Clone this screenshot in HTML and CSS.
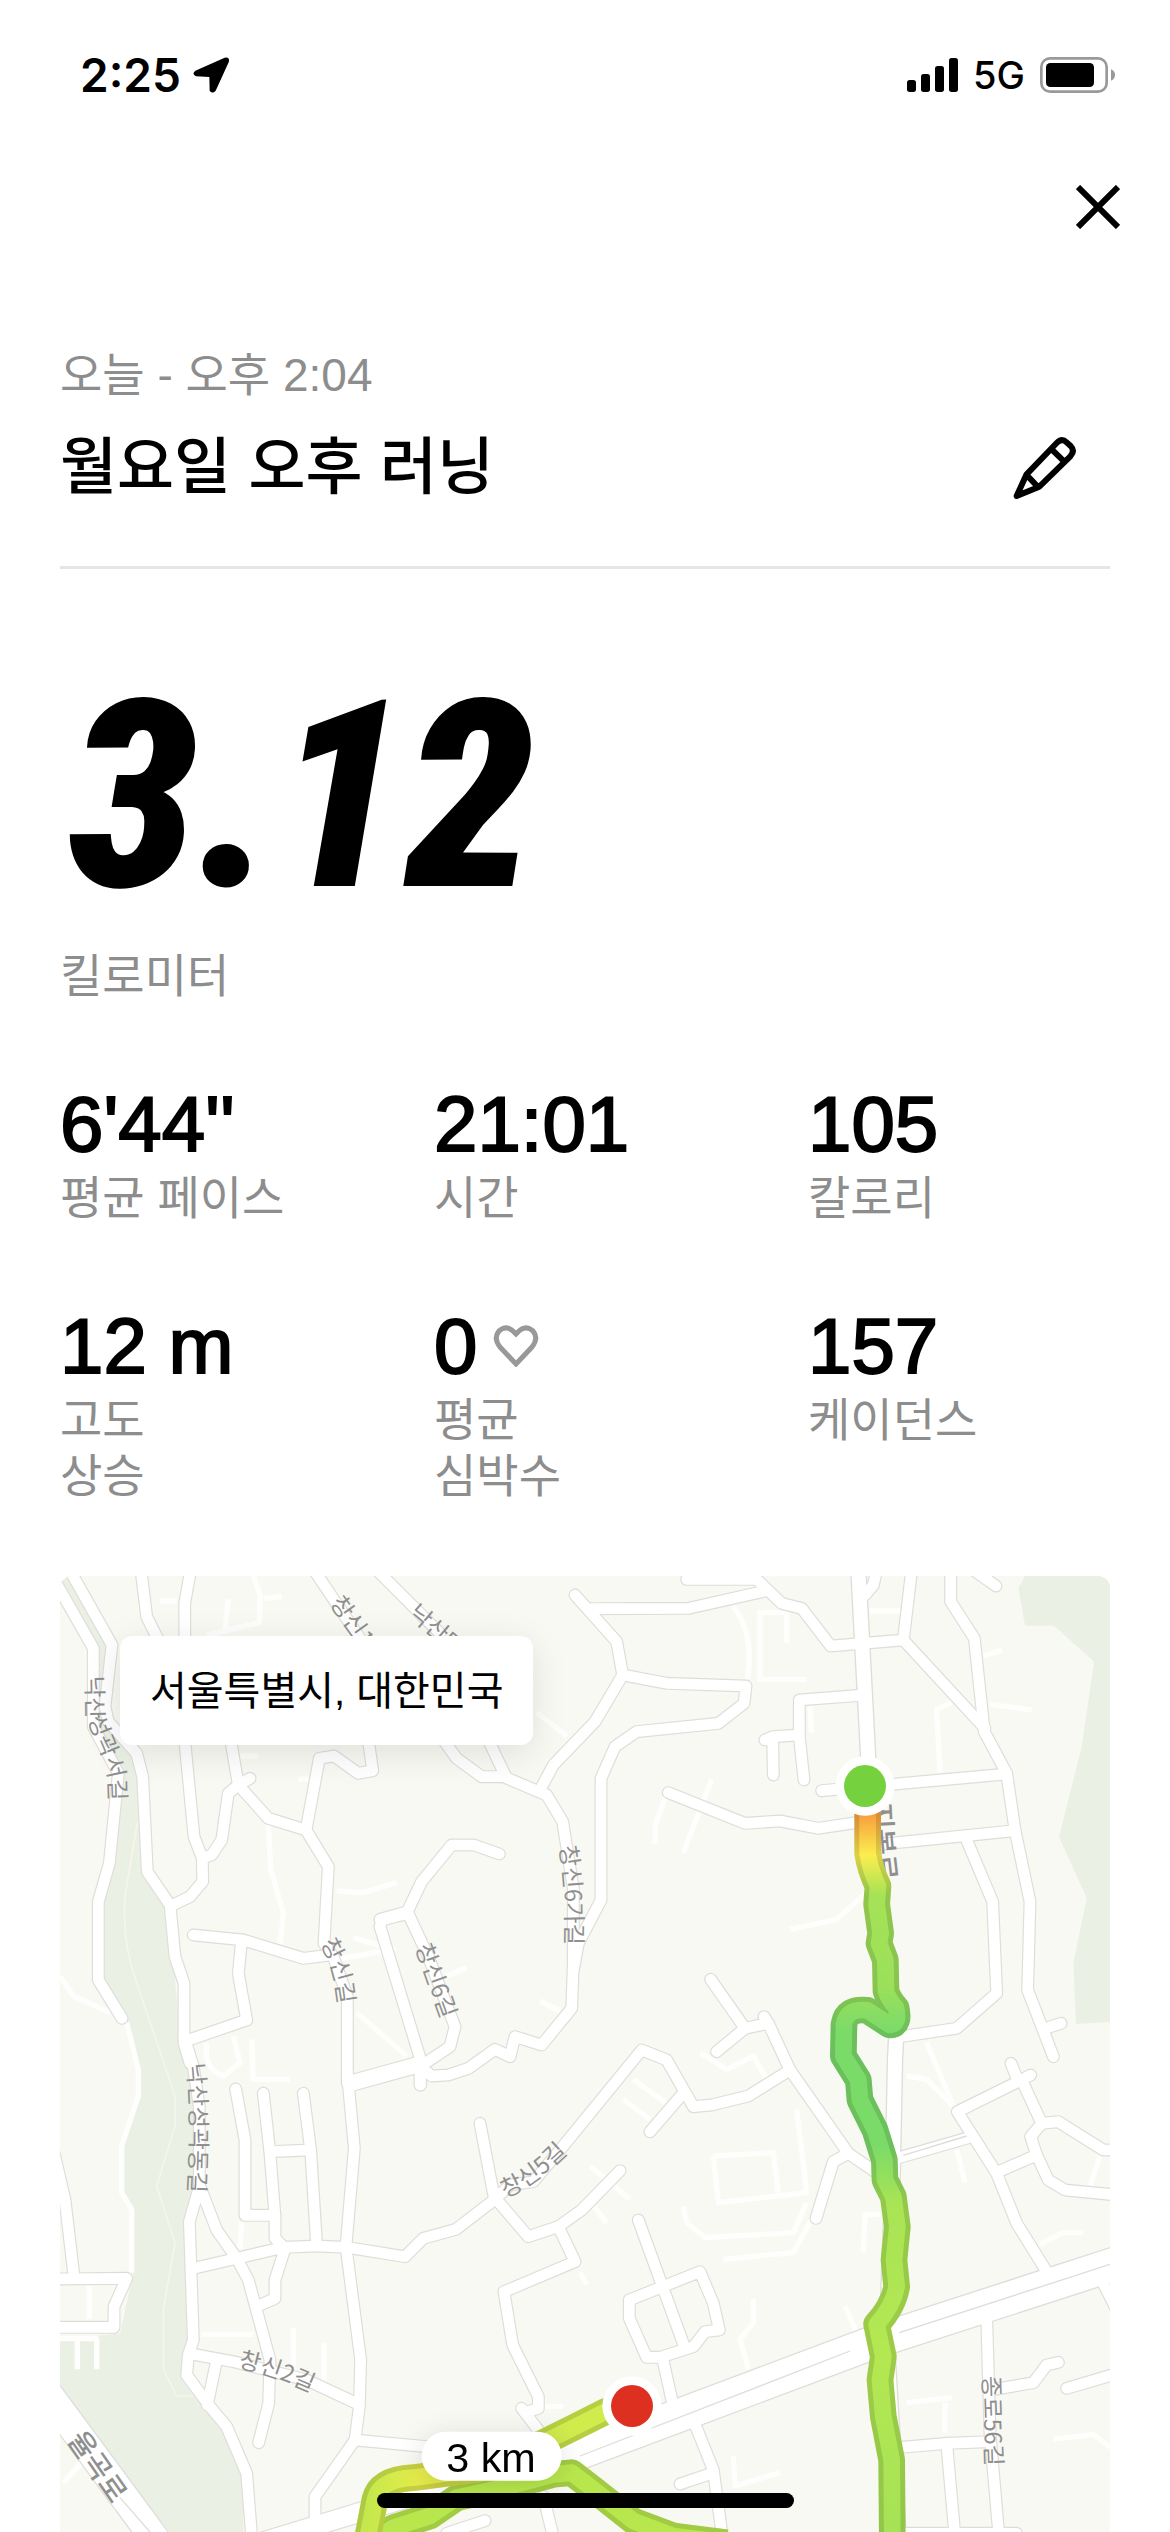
FILE: index.html
```
<!DOCTYPE html>
<html lang="ko">
<head>
    <meta charset="UTF-8">
    <meta name="viewport" content="width=device-width, initial-scale=1.0">
    <title>월요일 오후 러닝</title>
    <link rel="stylesheet" href="styles.css">
</head>
<body>
    <div class="status-bar">
        <div class="status-group">
            <span class="time">2:25</span>
            <svg class="location-icon" viewBox="392 51 108 108" aria-hidden="true">
                <path d="M399 92 L487 53 Q504 50 499 67 L460 152 Q450 163 442 152 L441 111 L401 109 Q387 102 399 92Z"/>
            </svg>
        </div>
        <div class="status-group status-right">
            <svg class="signal-icon" viewBox="0 0 153 102" aria-hidden="true">
                <rect x="0" y="66" width="27" height="36" rx="8"/>
                <rect x="42" y="48" width="27" height="54" rx="8"/>
                <rect x="84" y="24" width="27" height="78" rx="8"/>
                <rect x="126" y="0" width="27" height="102" rx="8"/>
            </svg>
            <span class="network">5G</span>
            <svg class="battery-icon" viewBox="0 0 225 108" aria-hidden="true">
                <rect class="battery-shell" x="4" y="4" width="196" height="100" rx="26"/>
                <rect x="18" y="18" width="144" height="72" rx="13"/>
                <path class="battery-tip" d="M213 37 Q225 42 225 54 Q225 66 213 71Z"/>
            </svg>
        </div>
    </div>

    <nav class="top-nav">
        <button type="button" class="icon-btn" aria-label="닫기">
            <svg class="close-icon" viewBox="0 0 44 44"><path d="M2 2 L42 42 M42 2 L2 42"/></svg>
        </button>
    </nav>

    <main class="content">
        <header class="run-header">
            <p class="run-date">오늘 - 오후 2:04</p>
            <div class="title-row">
                <h1>월요일 오후 러닝</h1>
                <button type="button" class="icon-btn" aria-label="이름 수정">
                    <svg class="pencil-icon" viewBox="40 45 198 198">
                        <path d="M80 164 L171 69 Q186 53 201 67 L213 78 Q227 92 212 109 L119 200 L51 228 Z M160 92 L190 121 M86 170 L110 196"/>
                    </svg>
                </button>
            </div>
        </header>

        <section class="distance">
            <p class="distance-value">3.12</p>
            <p class="label">킬로미터</p>
        </section>

        <section class="stats">
            <div class="stat">
                <p class="value">6'44''</p>
                <p class="label">평균 페이스</p>
            </div>
            <div class="stat">
                <p class="value">21:01</p>
                <p class="label">시간</p>
            </div>
            <div class="stat">
                <p class="value">105</p>
                <p class="label">칼로리</p>
            </div>
            <div class="stat">
                <p class="value">12 m</p>
                <p class="label">고도<br>상승</p>
            </div>
            <div class="stat">
                <p class="value">0
                    <svg class="heart-icon" viewBox="0 0 44 42" aria-hidden="true">
                        <path d="M22 39 L6 22 Q-1 13 5 6 Q13 -1 21 8 L22 9 L23 8 Q31 -1 39 6 Q45 13 38 22 Z"/>
                    </svg>
                </p>
                <p class="label">평균<br>심박수</p>
            </div>
            <div class="stat">
                <p class="value">157</p>
                <p class="label">케이던스</p>
            </div>
        </section>

        <section class="map">
            <svg class="map-canvas" viewBox="0 0 3150 2868" preserveAspectRatio="xMidYMin slice" role="img" aria-label="러닝 경로 지도">
                <defs>
                    <!-- side streets, one group per map tile -->
                    <g id="streets">
                        <g transform="translate(-60 -48)">
                            <path d="M50 72 L160 265 L160 500 L235 640 L208 910 L175 1025 L175 1260 L246 1375"/>
                            <path d="M88 28 L216 255 L195 440 L205 485 L290 580 L308 650 L322 935 L390 1035 L405 1190 L432 1270 L432 1450 L450 1510"/>
                            <path d="M303 30 L320 170 L370 270"/>
                            <path d="M452 30 L434 130 L436 560 L462 830 L487 895 L488 965 L450 1010 L392 1038"/>
                            <path d="M487 895 L515 885 L545 840 L565 700 L595 675 L630 655"/>
                            <path d="M572 540 L595 675 L685 775 L798 810 L865 920 L852 1150 L880 1190 L922 1310 L922 1570"/>
                            <path d="M798 810 L838 595 L882 588 L955 640 L998 632 L985 540"/>
                            <path d="M460 1125 L610 1140 L790 1195 L870 1185"/>
                            <path d="M605 1140 L595 1240 L620 1380 L440 1442"/>
                            <path d="M815 20 L960 235"/>
                            <path d="M1000 20 L1200 220"/>
                            <path d="M1105 1060 L1025 1080 L1020 1100 L1142 1500"/>
                        </g>
                        <g transform="translate(1020 -48)">
                            <path d="M130 540 L170 595 L245 650 L310 650 L440 705 L488 785 L520 985 L520 1210 L515 1345 L425 1455 L345 1430 L330 1490 L285 1468 L205 1525 L145 1545 L95 1548 L60 1520 L-140 1575"/>
                            <path d="M265 540 L315 645"/>
                            <path d="M420 690 L460 615 L585 485 L668 345 L650 245 L525 105"/>
                            <path d="M575 146 L865 145 L1095 93"/>
                            <path d="M668 345 L800 370 L1038 378 L1032 430 L955 490 L710 515 L645 560 L603 655 L603 1020 L535 1150 L520 1230"/>
                            <path d="M860 58 L1070 58 L1145 130 L1205 145 L1292 258 L1510 240 L1535 30"/>
                            <path d="M805 698 L1035 790 L1140 783 L1255 805 L1400 783"/>
                            <path d="M298 882 L222 855 L155 855 L65 965 L22 1055 L-60 1078"/>
                            <path d="M22 1055 L85 1190 L165 1400 L150 1460 L60 1520 L60 1575"/>
                            <path d="M932 1258 L1035 1405 L950 1475"/>
                            <path d="M1035 1405 L1105 1390 L1170 1530 L1345 1780 L1425 1835"/>
                            <path d="M1092 1370 L1105 1390"/>
                        </g>
                        <g transform="translate(2100 -48)">
                            <path d="M350 30 L340 75 L315 105"/>
                            <path d="M430 240 L675 505"/>
                            <path d="M572 30 L572 125 L643 235 L673 515 L740 640 L765 810 L810 1025 L803 1290 L880 1490"/>
                            <path d="M185 692 L740 642"/>
                            <path d="M370 852 L765 812"/>
                            <path d="M620 840 L698 1025 L710 1300 L590 1405 L420 1430"/>
                            <path d="M865 1402 L903 1390"/>
                            <path d="M640 30 L708 78"/>
                            <path d="M300 406 L118 420 L118 530 L132 660"/>
                            <path d="M118 525 L38 530 L15 540"/>
                            <path d="M38 540 L40 645"/>
                        </g>
                        <g transform="translate(-60 1392)">
                            <path d="M432 -10 L460 80 L478 200 L478 440 L448 545 L460 900 L445 945 L440 1005 L510 1100 L560 1160 L620 1300 L635 1490"/>
                            <path d="M480 440 L530 570 L590 655 L625 720 L690 960 L686 1090 L656 1208"/>
                            <path d="M460 685 L590 655 L730 622 L830 618 L920 622 L1095 650 L1150 595 L1248 568 L1362 480"/>
                            <path d="M587 147 L615 300 L615 526 L705 526"/>
                            <path d="M670 160 L690 340 L705 530 L705 595 L735 625 L705 720 L705 775 L650 800"/>
                            <path d="M690 335 L810 330"/>
                            <path d="M790 160 L812 330 L830 618"/>
                            <path d="M922 100 L943 325 L918 620 L962 960 L958 1100 L945 1200 L825 1370 L825 1440"/>
                            <path d="M922 125 L1140 65 L1142 135"/>
                            <path d="M455 942 L580 965 L800 1020 L950 1090"/>
                            <path d="M528 970 L502 1095"/>
                            <path d="M945 1200 L1160 1220"/>
                            <path d="M40 330 L75 480 L102 710"/>
                            <path d="M30 717 L260 715 L222 800 L222 862 L30 862"/>
                        </g>
                        <g transform="translate(1020 1392)">
                            <path d="M240 250 L282 470 L385 590 L475 560 L545 510 L660 392"/>
                            <path d="M282 480 L330 435 L400 425 L480 330 L725 30 L800 60 L880 200 L935 195 L1045 168 L1170 90"/>
                            <path d="M845 165 L750 275"/>
                            <path d="M475 560 L525 665 L312 755 L338 915 L415 1070 L415 1105 L385 1115"/>
                            <path d="M365 1105 L430 1190"/>
                            <path d="M715 540 L855 925"/>
                            <path d="M688 780 L900 695 L940 790 L958 870 L915 875 L880 920 L780 952 L740 952 L688 835 Z"/>
                            <path d="M788 955 L822 1110"/>
                            <path d="M880 1140 L940 1290 L967 1490"/>
                            <path d="M935 1300 L840 1332"/>
                            <path d="M430 1370 L460 1490"/>
                            <path d="M140 1480 L255 1442"/>
                        </g>
                        <g transform="translate(2100 1392)">
                            <path d="M265 340 L220 365 L168 535"/>
                            <path d="M410 355 L630 292"/>
                            <path d="M753 70 L775 125 L812 105"/>
                            <path d="M780 122 L592 215 L710 400 L770 550 L860 695"/>
                            <path d="M785 120 L845 250 L812 290 L830 345 L715 395"/>
                            <path d="M845 250 L895 245 L1030 330 L1070 330"/>
                            <path d="M830 345 L865 420 L915 450 L1070 465"/>
                            <path d="M680 830 L690 1180 L717 1490"/>
                            <path d="M705 1048 L820 1028 L860 975 L895 967"/>
                            <path d="M920 1045 L1070 1001"/>
                            <path d="M425 1222 L560 1210 L690 1205"/>
                            <path d="M560 1210 L585 1490"/>
                            <path d="M430 1480 L770 1480"/>
                            <path d="M1025 720 L1065 800"/>
                        </g>
                    </g>
                    <path id="main-road" d="M2395 -20 L2407 212 L2425 552 L2450 1002 L2510 1352 L2505 1452 L2498 1800 L2480 2292 L2515 2868"/>
                    <path id="avenue" d="M3170 2062 L2460 2292 L2100 2427 L1500 2652"/>
                    <path id="avenue-west" d="M1540 2640 L1120 2742 L600 2900"/>
                    <path id="yulgok-ro" d="M-40 2448 L310 2922"/>

                    <path id="route" d="M2423 690 L2423 832 Q2430 880 2454 930 L2450 985 L2462 1072 L2457 1102 L2476 1152 L2478 1245 Q2485 1270 2508 1295 Q2520 1345 2490 1347 L2422 1303 Q2360 1295 2352 1345 L2350 1440 L2395 1512 L2400 1572 L2445 1662 L2473 1752 L2475 1812 L2500 1862 L2512 1952 L2502 2052 L2510 2132 Q2500 2190 2450 2245 L2470 2342 L2460 2412 L2470 2522 L2495 2652 L2497 2900"/>
                    <path id="route-finish" d="M1715 2490 L1640 2505 L1560 2545 L1450 2600 L1250 2680 L1060 2705 Q960 2710 945 2770 L920 2900"/>
                    <path id="route-south" d="M930 2900 L1000 2855 L1110 2820 L1190 2765 L1350 2730 L1480 2695 L1535 2690 L1600 2740 L1720 2835 L1840 2880 L2000 2900"/>

                    <linearGradient id="pace" gradientUnits="userSpaceOnUse" x1="0" y1="720" x2="0" y2="2868">
                        <stop offset="0" stop-color="#f7a23f"/>
                        <stop offset="0.055" stop-color="#fbee4e"/>
                        <stop offset="0.11" stop-color="#a6e256"/>
                        <stop offset="0.24" stop-color="#9be05b"/>
                        <stop offset="0.3" stop-color="#7bdb69"/>
                        <stop offset="0.46" stop-color="#7bdb69"/>
                        <stop offset="0.54" stop-color="#a8e455"/>
                        <stop offset="0.75" stop-color="#b4e852"/>
                        <stop offset="1" stop-color="#a6e256"/>
                    </linearGradient>
                    <linearGradient id="pace-finish" gradientUnits="userSpaceOnUse" x1="920" y1="0" x2="1700" y2="0">
                        <stop offset="0" stop-color="#c4e84c"/>
                        <stop offset="0.2" stop-color="#e6ec4b"/>
                        <stop offset="0.7" stop-color="#cfeb4c"/>
                        <stop offset="1" stop-color="#cfeb4c"/>
                    </linearGradient>

                    <!-- baselines for street names -->
                    <path id="name-seogil" d="M78 300 L80 420 Q98 470 128 540 Q158 600 142 760"/>
                    <path id="name-changsin1" d="M808 82 L950 280"/>
                    <path id="name-naksan" d="M1042 118 L1220 270"/>
                    <path id="name-changsin" d="M780 1102 Q833 1180 838 1340"/>
                    <path id="name-changsin6" d="M1066 1112 L1180 1430"/>
                    <path id="name-changsin6ga" d="M1498 812 Q1524 940 1514 1180"/>
                    <path id="name-donggil" d="M381 1464 Q400 1640 380 1930"/>
                    <path id="name-changsin5" d="M1336 1864 Q1440 1827 1580 1670"/>
                    <path id="name-changsin2" d="M533 2374 Q650 2397 820 2480"/>
                    <path id="name-jongno" d="M2768 2400 L2780 2760"/>
                    <path id="name-yulgok" d="M20 2592 L200 2850"/>
                    <path id="name-jibong" d="M2431 682 Q2434 810 2458 970"/>
                </defs>

                <rect class="land" width="3150" height="2868"/>
                <path class="park" d="M5 12 L20 0 L140 212 L130 352 L155 432 L240 592 L250 892 L325 992 L340 1152 L360 1382 L395 1492 L410 1832 L380 1952 L400 2282 L370 2402 L490 2572 L550 2692 L550 2868 L330 2868 L0 2452 L0 2292 L180 2272 L220 2092 L220 1892 L185 1842 L185 1692 L240 1562 L220 1392 L210 1352 L130 1212 L130 972 L165 852 L175 592 L105 412 L110 217 Z"/>
                <path class="park" d="M2895 0 L2875 37 L2895 149 L2982 149 L3102 257 L3065 512 L2997 782 L3080 967 L3040 1162 L3048 1344 L3150 1338 L3150 0 Z"/>
                <path class="trail" d="M232 740 L195 960 Q185 1100 230 1220 L345 1560 L345 1650 L290 1830 L345 2000 L310 2200 L310 2380 L350 2460 L400 2460"/>

                <g class="alley">
                    <path d="M300 75 H350 M580 0 L600 55 L598 140 L440 178 M610 68 L665 62 M505 70 L495 160 M540 540 H595 M715 610 H760"/>
                    <path d="M625 740 L632 880 L670 1010 L660 1110 M830 945 L910 950 L1010 920 M880 1085 L1000 1120 L830 1150 M890 1310 L1040 1440"/>
                    <path d="M0 1200 L40 1260 L150 1310 M200 1340 L235 1480 L235 1560 L185 1710 L185 1850 L215 1900 V2090"/>
                    <path d="M440 1400 Q430 1480 490 1500 L540 1460 L520 1380 M575 1390 L580 1510 L690 1510 M545 1940 L540 2020"/>
                    <path d="M0 2288 H110 V2380 M52 2288 V2380 M88 2130 V2230 M425 2275 H580 M700 2255 V2390 M792 2300 V2420 M10 2720 L70 2655"/>
                    <path d="M1430 410 L1520 480 M2020 90 Q2085 180 2062 310 M2180 200 V110 H2100 V310 H2240 M1820 650 L1785 750 V805 M1955 610 L1870 830 M1160 1200 L1220 1175 M1440 1275 L1500 1305"/>
                    <path d="M2190 1060 L2330 1030 L2420 950 M2430 105 H2520 M2770 240 L2825 222 M2640 590 L2630 400 L2675 380 M2790 385 L2915 402 M2250 390 L2255 470"/>
                    <path d="M1720 1510 L1830 1590 M1690 1570 L1770 1630 M1590 1770 L1710 1870 M1600 1890 L1640 1940 M1560 2090 L1580 2125 M1920 1430 L2000 1480 L2080 1440 L2120 1510"/>
                    <path d="M1960 1740 L2140 1730 L2155 1850 M1960 1740 L1975 1880 L2240 1850 L2210 1600 M1870 1890 L1880 1940 L1935 1985 L2200 1970 L2240 1880 M1990 2050 L2200 2030 L2260 1920 M2080 2170 V2240 L2040 2290 L2065 2380"/>
                    <path d="M2540 1500 L2600 1510 L2680 1590 L2600 1400 M2690 1720 L2715 1820 M3120 1740 L3090 1830 M2460 1915 H2415 L2410 2030 M2940 2005 L3010 1970 H3070 M2355 2190 L2390 2270"/>
                    <path d="M2540 2480 L2675 2465 M2655 2480 V2570 M2980 2590 L3100 2575 L3160 2620 M2020 2640 L2025 2730 L2160 2690 M1450 2492 H1510"/>
                </g>

                <use href="#streets" class="street-edge"/>
                <use href="#main-road" class="main-edge"/>
                <use href="#avenue" class="avenue-edge"/>
                <use href="#avenue-west" class="west-edge"/>
                <use href="#yulgok-ro" class="yulgok-edge"/>
                <use href="#streets" class="street"/>
                <use href="#main-road" class="main"/>
                <use href="#avenue" class="avenue"/>
                <use href="#avenue-west" class="west"/>
                <use href="#yulgok-ro" class="yulgok"/>
                <path class="lane" d="M2518 2270 L3150 2065 M1560 2640 L2370 2325 M2530 1738 L2720 1680 M180 2765 L270 2868"/>

                <g class="street-name">
                    <text><textPath href="#name-seogil">낙산성곽서길</textPath></text>
                    <text><textPath href="#name-changsin1">창신1</textPath></text>
                    <text><textPath href="#name-naksan">낙산마</textPath></text>
                    <text><textPath href="#name-changsin">창신길</textPath></text>
                    <text><textPath href="#name-changsin6">창신6길</textPath></text>
                    <text><textPath href="#name-changsin6ga">창신6가길</textPath></text>
                    <text><textPath href="#name-donggil">낙산성곽동길</textPath></text>
                    <text><textPath href="#name-changsin5">창신5길</textPath></text>
                    <text><textPath href="#name-changsin2">창신2길</textPath></text>
                    <text><textPath href="#name-jongno">종로56길</textPath></text>
                    <text class="road-name"><textPath href="#name-yulgok">율곡로</textPath></text>
                    <text class="road-name"><textPath href="#name-jibong">지봉로</textPath></text>
                </g>

                <g class="route">
                    <use href="#route-south" class="route-outer" stroke="#b8e74d"/>
                    <use href="#route-south" class="route-shade"/>
                    <use href="#route-south" class="route-inner" stroke="#b8e74d"/>
                    <use href="#route-finish" class="route-outer" stroke="url(#pace-finish)"/>
                    <use href="#route-finish" class="route-shade"/>
                    <use href="#route-finish" class="route-inner" stroke="url(#pace-finish)"/>
                    <use href="#route" class="route-outer" stroke="url(#pace)"/>
                    <use href="#route" class="route-shade"/>
                    <use href="#route" class="route-inner" stroke="url(#pace)"/>
                </g>

                <g class="marker start">
                    <circle class="ring" cx="2415" cy="630" r="89"/>
                    <circle class="dot" cx="2415" cy="630" r="63"/>
                </g>
                <g class="marker finish">
                    <circle class="ring" cx="1716" cy="2490" r="89"/>
                    <circle class="dot" cx="1716" cy="2490" r="63"/>
                </g>
                <g class="km-marker">
                    <rect x="1085" y="2567" width="420" height="147" rx="73"/>
                    <text x="1293" y="2689">3 km</text>
                </g>
            </svg>
            <p class="place">서울특별시, 대한민국</p>
        </section>
    </main>

    <div class="home-indicator"></div>
</body>
</html>
```
FILE: styles.css
```
* {
    box-sizing: border-box;
}
body {
    margin: 0;
    height: 100vh;
    overflow: hidden;
    display: flex;
    flex-direction: column;
    background-color: #fff;
    color: #000;
    font-family: "Liberation Sans", "Noto Sans CJK KR", sans-serif;
}
p, h1 {
    margin: 0;
}
svg {
    display: block;
}

/* status bar */
.status-bar {
    display: flex;
    justify-content: space-between;
    align-items: center;
    height: 150px;
    padding: 0 55px 0 80px;
    font-family: Inter, sans-serif;
}
.status-group {
    display: flex;
    align-items: center;
    gap: 12px;
}
.time {
    font-size: 46px;
    font-weight: 600;
}
.network {
    font-size: 38px;
    font-weight: 500;
}
.status-right {
    gap: 15px;
}
.location-icon {
    width: 36px;
    height: 36px;
}
.signal-icon {
    width: 51px;
    height: 34px;
}
.battery-icon {
    width: 75px;
    height: 36px;
}
.battery-shell {
    fill: none;
    stroke: #999;
    stroke-width: 8;
}
.battery-tip {
    fill: #999;
}

/* buttons */
.icon-btn {
    padding: 0;
    border: 0;
    background: none;
}
.top-nav {
    display: flex;
    justify-content: flex-end;
    align-items: center;
    height: 114px;
    padding-right: 50px;
}
.close-icon {
    width: 44px;
    height: 44px;
    stroke: #000;
    stroke-width: 6;
}
.pencil-icon {
    width: 66px;
    height: 66px;
    fill: none;
    stroke: #000;
    stroke-width: 18;
    stroke-linejoin: round;
}

.content {
    flex: 1;
    min-height: 0;
    display: flex;
    flex-direction: column;
    padding: 83px 60px 0;
}
.run-header {
    padding-bottom: 54px;
    border-bottom: 3px solid #e5e5e5;
}
.run-date, .label {
    font-size: 46px;
    line-height: 56px;
    color: #8d8d8d;
}
.title-row {
    display: flex;
    justify-content: space-between;
    align-items: center;
    margin-top: 21px;
    padding-right: 31px;
}
h1 {
    padding-bottom: 12px;
    font-family: "Noto Sans CJK KR", sans-serif;
    font-size: 62px;
    line-height: 76px;
    font-weight: 500;
}

.distance {
    padding-top: 128px;
}
.distance-value {
    margin-bottom: 51px;
    padding-left: 8px;
    font-family: "Roboto Condensed", Roboto, sans-serif;
    font-size: 262px;
    line-height: 200px;
    font-weight: 900;
    font-style: italic;
}

.stats {
    display: grid;
    grid-template-columns: repeat(3, 1fr);
    column-gap: 72px;
    row-gap: 78px;
    margin-top: 78px;
}
.value {
    display: flex;
    align-items: center;
    gap: 16px;
    margin-bottom: 4px;
    font-size: 78px;
    line-height: 84px;
    -webkit-text-stroke: 2px #000;
}
.heart-icon {
    width: 46px;
    height: 42px;
    fill: none;
    stroke: #999;
    stroke-width: 5;
}

/* map */
.map {
    position: relative;
    flex: 1;
    min-height: 0;
    margin-top: 72px;
    border-radius: 12px 12px 0 0;
    overflow: hidden;
}
.map-canvas {
    width: 100%;
    height: 100%;
}
.place {
    position: absolute;
    top: 60px;
    left: 60px;
    padding: 27px 30px 26px;
    font-size: 40px;
    line-height: 56px;
    background-color: #fff;
    border-radius: 12px;
    box-shadow: 0 8px 36px rgba(0, 0, 0, 0.1);
}
.land {
    fill: #f8f9f3;
}
.park {
    fill: #eaf1e4;
}
.trail {
    fill: none;
    stroke: #f5f6e8;
    stroke-width: 5;
}
.alley {
    fill: none;
    stroke: #fefefc;
    stroke-width: 16;
    stroke-linejoin: round;
}
.street, .street-edge, .main, .main-edge, .avenue, .avenue-edge,
.west, .west-edge, .yulgok, .yulgok-edge {
    fill: none;
    stroke: #fff;
    stroke-linecap: round;
    stroke-linejoin: round;
}
.street-edge, .main-edge, .avenue-edge, .west-edge, .yulgok-edge {
    stroke: #dfddd9;
}
.street { stroke-width: 32; }
.street-edge { stroke-width: 39; }
.main { stroke-width: 42; }
.main-edge { stroke-width: 50; }
.avenue { stroke-width: 98; }
.avenue-edge { stroke-width: 106; }
.west { stroke-width: 56; }
.west-edge { stroke-width: 63; }
.yulgok { stroke-width: 84; }
.yulgok-edge { stroke-width: 92; }
.lane {
    fill: none;
    stroke: #dfddd9;
    stroke-width: 4;
}
.street-name {
    font-family: "Noto Sans CJK KR", sans-serif;
    font-size: 70px;
    fill: #8f8f8f;
}
.road-name {
    font-size: 86px;
    font-weight: 500;
}

.route {
    fill: none;
    stroke-linejoin: round;
}
.route-outer, .route-shade {
    stroke-width: 80;
}
.route-shade {
    stroke: rgba(0, 0, 0, 0.12);
}
.route-inner {
    stroke-width: 50;
}
.ring {
    fill: #fff;
}
.start .dot {
    fill: #76d13e;
}
.finish .dot {
    fill: #de3020;
}
.km-marker {
    filter: drop-shadow(0 12px 40px rgba(0, 0, 0, 0.12));
}
.km-marker rect {
    fill: #fff;
}
.km-marker text {
    font-size: 124px;
    text-anchor: middle;
}

.home-indicator {
    position: fixed;
    bottom: 24px;
    left: 50%;
    width: 417px;
    height: 15px;
    margin-left: -208px;
    border-radius: 8px;
    background-color: #000;
}
```
